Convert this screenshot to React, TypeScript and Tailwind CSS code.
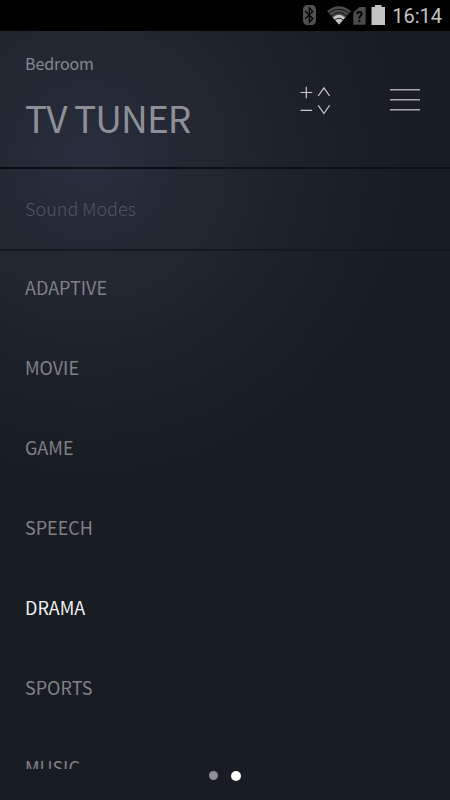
import React, { useState } from 'react';

const modes = ['ADAPTIVE', 'MOVIE', 'GAME', 'SPEECH', 'DRAMA', 'SPORTS', 'MUSIC'];

function StatusBar() {
  return (
    <div className="flex h-[31px] shrink-0 items-center justify-end bg-black pr-[8px]">
      <svg width="84" height="31" viewBox="302 0 84 31" className="mr-[6px]">
        {/* bluetooth */}
        <rect x="303" y="5" width="13" height="20" rx="4.5" fill="#505050" />
        <path d="M305.3 11l7.4 7.5-3.3 3.7V8l3.3 3.4-7.4 7.4" fill="none" stroke="#000" strokeWidth="1.3" />
        {/* wifi */}
        <path d="M327 11.2Q339 1.5 351 11.2L339 24.5Z" fill="#4c4c4c" />
        <path d="M332.8 17.6Q339 11.8 345.2 17.6L339 24.5Z" fill="#c4c4c4" />
        <path
          d="M328.6 13.3Q339 5.2 349.4 13.3M331 16.1Q339 9 347 16.1M334.4 20.3Q339 16.2 343.6 20.3"
          fill="none"
          stroke="#000"
          strokeWidth="0.8"
        />
        {/* sim */}
        <path d="M353.3 12.5L359.5 7H365.6V24.7H353.3Z" fill="#4c4c4c" />
        <text x="359.5" y="22" textAnchor="middle" className="font-['Roboto',sans-serif] text-[14px] font-bold" fill="#000">
          ?
        </text>
        {/* battery */}
        <path d="M371.5 7H375V5H381.5V7H385V25H371.5Z" fill="#c4c4c4" />
      </svg>
      <span className="mt-[1px] font-['Roboto',sans-serif] text-[20px] leading-[24px] text-[#c4c4c4]">16:14</span>
    </div>
  );
}

function Header() {
  return (
    <header className="flex h-[138px] shrink-0 justify-between border-b-2 border-[#0d0f13] pl-[25px]">
      <div className="flex flex-col">
        <span className="mt-[20px] text-[16px] leading-[24px] tracking-[-0.1px] text-[#85888f]">Bedroom</span>
        <h1 className="mt-[17px] text-[37px] leading-[50px] tracking-[-0.9px] text-[#8e9098]">TV TUNER</h1>
      </div>
      <div className="flex gap-[60px] pr-[30px] pt-[54px]">
        <button className="h-[30px]">
          <svg width="30" height="30" viewBox="0 0 30 30" fill="none" stroke="#c9c9cc" strokeWidth="1.2">
            <path d="M.5 7.5H12.2M6.3 1.7V13.3M.5 25.4H12.2M18.2 11L23.9 2.8L29.6 11M18.2 20.3L23.9 28.5L29.6 20.3" />
          </svg>
        </button>
        <button className="h-[30px]">
          <svg width="30" height="30" viewBox="0 0 30 30" stroke="#a9a7ac" strokeWidth="1.5">
            <path d="M0 4.8H30M0 14.8H30M0 24.8H30" />
          </svg>
        </button>
      </div>
    </header>
  );
}

export default function App() {
  const [active, setActive] = useState('DRAMA');

  return (
    <div className="flex h-[800px] w-[450px] flex-col overflow-hidden bg-[#181c23] font-['Noto_Sans_CJK_JP',sans-serif]">
      <StatusBar />
      <div className="flex min-h-0 flex-1 flex-col bg-[radial-gradient(circle_at_90px_130px,#282e3c_0px,#222731_120px,#1d2129_210px,#181c23_310px)]">
        <Header />
        <div className="h-[82px] shrink-0 border-b-2 border-[#15181c] pl-[25px] pt-[25px]">
          <h2 className="text-[18px] leading-[28px] font-light text-[#535761]">Sound Modes</h2>
        </div>
        <ul className="h-[518px] shrink-0 overflow-hidden">
          {modes.map((mode) => (
            <li key={mode} className="h-[80px]">
              <button
                onClick={() => setActive(mode)}
                className={`flex h-[72px] w-full items-center pl-[25px] text-[18px] leading-[28px] ${
                  active === mode ? 'text-[#f1f1f2]' : 'text-[#7f8186]'
                }`}
              >
                {mode}
              </button>
            </li>
          ))}
        </ul>
        <div className="flex flex-1 items-start justify-center pt-[1.5px]">
          <div className="flex items-center gap-[13px]">
            <span className="size-[9px] rounded-full bg-[#8f8f93]" />
            <span className="size-[10.5px] rounded-full bg-white" />
          </div>
        </div>
      </div>
    </div>
  );
}
